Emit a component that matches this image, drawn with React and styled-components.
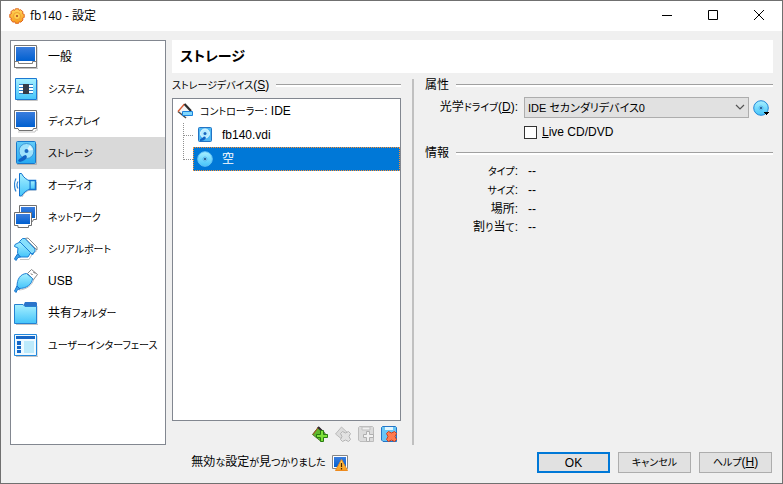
import React, { useState } from 'react'
import styled, { createGlobalStyle } from 'styled-components'

const GlobalStyle = createGlobalStyle`
    * {
        box-sizing: border-box;
    }

    body {
        margin: 0;
        color: #000;
        background: #f0f0f0;
        font-family: "Liberation Sans", "Noto Sans CJK JP", sans-serif;
        font-size: 12px;
        line-height: 16px;
        font-feature-settings: "palt";
    }

    button, select, input {
        font: inherit;
        font-feature-settings: inherit;
        color: inherit;
    }

    svg {
        display: block;
        flex: none;
    }
`

/* ---------- icons ---------- */

const Gradients = () => (
    <svg width="0" height="0" style={{ position: 'absolute' }} aria-hidden="true">
        <defs>
            <linearGradient id="screen" x1="0" y1="0" x2="0" y2="1">
                <stop offset="0" stopColor="#3a7ddd" />
                <stop offset="1" stopColor="#0060d0" />
            </linearGradient>
            <linearGradient id="aqua" x1="0" y1="0" x2="0" y2="1">
                <stop offset="0" stopColor="#a8f0ff" />
                <stop offset="1" stopColor="#44c4fa" />
            </linearGradient>
            <linearGradient id="sky" x1="0" y1="0" x2="0" y2="1">
                <stop offset="0" stopColor="#63ccf8" />
                <stop offset="1" stopColor="#27aaf2" />
            </linearGradient>
            <linearGradient id="amber" x1="0" y1="0" x2="0" y2="1">
                <stop offset="0" stopColor="#ffd65c" />
                <stop offset="1" stopColor="#f79a1c" />
            </linearGradient>
        </defs>
    </svg>
)

const Icon = ({ size = 24, children }) => (
    <svg width={size} height={size} viewBox={`0 0 ${size} ${size}`} fill="none" aria-hidden="true">
        {children}
    </svg>
)

const GearIcon = () => (
    <Icon size={16}>
        <path d="M6.4.8h3.2l.6 1.6 1.6-.7 2.2 2.2-.6 1.700 1.800.700v3.200l-1.800.800.600 1.700-2.200 2.200-1.600-.600-.600 1.700H6.400l-.700-1.700-1.700.600L1.800 12l.700-1.700L.800 9.500V6.300l1.700-.700-.700-1.700L4 1.700l1.700.700z" fill="url(#amber)" stroke="#e0641c" strokeLinejoin="round" />
        <circle cx="8" cy="8" r="3.500" fill="#ffcf50" stroke="#f0a030" />
        <circle cx="8" cy="8" r="1" fill="#a8401c" />
    </Icon>
)

const GeneralIcon = () => (
    <Icon>
        <path d="M2 23.500h22V2" stroke="#c4c4c4" />
        <path d="M.5.500h22v22H.500z" fill="#fff" stroke="#757575" />
        <path d="M2 2h19v14H2z" fill="url(#screen)" />
        <path d="M1 16.500h3.500v2h14v-2H22" stroke="#808080" />
    </Icon>
)

const SystemIcon = () => (
    <Icon>
        <path d="M3 23.500h20.500V3" stroke="#c4c4c4" />
        <path d="M1.500 1.500h21v21h-21z" fill="url(#aqua)" stroke="#1c78d2" />
        <path d="M5 7h14v10H5z" fill="#fff" />
        <path d="M5 7.500h14M5 10.500h14M5 13.500h14M5 16.500h14" stroke="#2b7cc8" />
        <path d="M9 7h6v10H9z" fill="#343b48" />
    </Icon>
)

const DisplayIcon = () => (
    <Icon>
        <path d="M4 23h17l1-2h2V3" stroke="#c4c4c4" />
        <path d="M.500 1.500h22v18h-3l-1 2H5l-1-2H.500z" fill="#fff" stroke="#707070" />
        <path d="M2 3h19v15H2z" fill="url(#screen)" />
    </Icon>
)

const StorageIcon = () => (
    <Icon>
        <path d="M3 23.500h19.500V3" stroke="#b0b0b0" />
        <rect x="2.500" y=".500" width="19" height="22" rx="1" fill="url(#sky)" stroke="#1778cc" />
        <circle cx="12.500" cy="10" r="7.500" fill="#9ee2fc" stroke="#3c96d8" />
        <path d="M12 10l4-6 3 5z" fill="#e0f8ff" />
        <circle cx="12.500" cy="10" r="2" fill="#1a6ac4" />
        <path d="M12 14c-3 0-4 3-7 4l-1 2 2 1c3-1 6-2 7-5z" fill="#1263c4" />
    </Icon>
)

const AudioIcon = () => (
    <Icon>
        <path d="M8 24c2-4 5-6 8-7h6.500V9" stroke="#c4c4c4" />
        <path d="M4 8.500c-1.200 2-1.200 5 0 7M2 5.500c-2 3.500-2 9.500 0 13" stroke="#2a84d4" strokeWidth="1.200" />
        <path d="M15.500 7.500h6v9h-6z" fill="url(#aqua)" stroke="#1272ce" strokeWidth="1.500" />
        <path d="M5.500.500h2c2 4 5 6 8.500 7.500v8c-3.500 1.500-6.500 3.500-8.500 7h-2z" fill="url(#aqua)" stroke="#1272ce" strokeLinejoin="round" />
    </Icon>
)

const NetworkIcon = () => (
    <Icon>
        <path d="M5.500.500h17v14h-3l-1 2h-10l-3-3z" fill="#fff" stroke="#707070" />
        <path d="M7 2h14v11H7z" fill="url(#screen)" />
        <path d="M.500 7.500h17v13h-3v2H4v-2H.500z" fill="#fff" stroke="#707070" />
        <path d="M2 9h14v10H2z" fill="url(#screen)" />
    </Icon>
)

const SerialIcon = () => (
    <Icon>
        <path d="M6 22.500h9l3-5 5-4" stroke="#c4c4c4" />
        <path d="M11 1.500l3-.500 9 9v3z" fill="#fff" stroke="#8c8c8c" />
        <path d="M6 5L1 7.500.500 9.500 4 11l-.500 5L6 20h8l2.500-4 2 2 1-2z" fill="url(#aqua)" stroke="#1c80d6" strokeLinejoin="round" />
        <path d="M8.500 1.500h2.500l10 10.500v2.500l-3 2.500L5.500 4.500z" fill="#86dffc" stroke="#1c80d6" strokeLinejoin="round" />
        <path d="M3.500 17l3 3-2.500.500L2 23.500.500 22l1-2z" fill="#3ba4e8" stroke="#1774ce" />
    </Icon>
)

const UsbIcon = () => (
    <Icon>
        <path d="M5 21c7-.500 13-4 15-11" stroke="#c4c4c4" />
        <path d="M13.500 4.500l4-4 6 5-4 5z" fill="#fff" stroke="#858585" />
        <path d="M17 4.500l1.500 1.500M19.500 3l1.500 1.500" stroke="#555" />
        <path d="M12.500 4.500l6 5c-.500 6-6 10-13.500 10L3 17.500c0-7 3-12.500 9.500-13z" fill="url(#aqua)" stroke="#1c80d6" strokeLinejoin="round" />
        <path d="M3 17l3 3-2.500.500-1.500 3L.500 22l1-2z" fill="#3ba4e8" stroke="#1774ce" />
    </Icon>
)

const FolderIcon = () => (
    <Icon>
        <path d="M2 23.500h22V5" stroke="#c4c4c4" />
        <path d="M9 5l2-4h11l1 1v4H9z" fill="#2b74ca" />
        <path d="M.500 3.500H9l2 2h11.500v17H.500z" fill="url(#aqua)" stroke="#2582d2" />
    </Icon>
)

const InterfaceIcon = () => (
    <Icon>
        <path d="M2 23.500h22V3" stroke="#c4c4c4" />
        <path d="M.500 1.500h22v21H.500z" fill="#effaff" stroke="#2388dc" />
        <path d="M2 3h19v3H2z" fill="#1767c6" />
        <path d="M3 8h4v4H3zM3 13h4v3H3zM3 17h4v3H3z" fill="#1668c8" />
        <path d="M10 8h10v12H10z" fill="#bdeafb" />
    </Icon>
)

const ControllerIcon = () => (
    <Icon size={16}>
        <path d="M7.500 1L15 9l-5 6L1 8.500z" fill="#f4f4f4" />
        <path d="M1 8.500L9 15" stroke="#4a4a4a" strokeWidth="1.500" />
        <path d="M7.500 1L1 8.500" stroke="#d85a30" strokeWidth="1.300" />
        <path d="M7.500 1L14 8" stroke="#2c2c2c" strokeWidth="2.200" />
        <path d="M5.500 8.500h10v4h-10z" fill="#82d8fc" stroke="#1c82dc" />
    </Icon>
)

const DiskIcon = () => (
    <Icon size={16}>
        <rect x="1.500" y=".500" width="13" height="14" rx="1" fill="#50b8f4" stroke="#2374c4" />
        <circle cx="8" cy="6.500" r="4.500" fill="#b4eaff" stroke="#e4f8ff" />
        <circle cx="8" cy="6.500" r="1.500" fill="#1a66c0" />
        <path d="M8 9.500c-2 0-3 2-5 3v1.500c3 0 5-1 6-3z" fill="#1263c4" />
    </Icon>
)

const DiscIcon = ({ menu }) => (
    <Icon size={16}>
        <circle cx="8" cy="8" r="7.300" fill="url(#aqua)" stroke={menu ? '#2388d8' : '#64c2f4'} />
        <circle cx="8" cy="8" r="2" fill="#8ce2ff" stroke="#54b6ec" />
        <circle cx="8" cy="8" r="1" fill="#123c78" />
        {menu && <path d="M11 12h5v1h-1v1h-1v1h-1v-1h-1v-1h-1z" fill="#000" />}
    </Icon>
)

const AddControllerIcon = () => (
    <Icon size={16}>
        <path d="M6.500 1l8 8-6 6-8-6.500z" fill="#61b72c" stroke="#4c7a30" />
        <path d="M6.500 1L1 8.500" stroke="#b04a24" />
        <path d="M6 1l6 6" stroke="#322834" strokeWidth="2" />
        <path d="M8.500 4.500h3v4h4v3h-4v4h-3v-4h-4v-3h4z" fill="#7ee03a" stroke="#287c12" />
    </Icon>
)

const RemoveControllerIcon = () => (
    <Icon size={16}>
        <path d="M6.500 1l8 7.500-6 6-8-6.500z" fill="#dcdcdc" stroke="#bcbcbc" />
        <path d="M7.500 5.500l3 1.500 3-1.500 2 2-1.500 3 1.500 3-2 2-3-1.500-3 1.500-2-2 1.500-3-1.500-3z" fill="#e2e2e2" stroke="#b4b4b4" />
    </Icon>
)

const AddAttachmentIcon = () => (
    <Icon size={16}>
        <path d="M.500 1.500l1-1h13l1 1v14H2l-1.500-1.500z" fill="#dcdcdc" stroke="#bcbcbc" />
        <path d="M4 1h8v3H4z" fill="#f0f0f0" stroke="#c0c0c0" />
        <path d="M8.500 5.500h3v3h4v3h-4v4h-3v-4h-3v-3h3z" fill="#f2f2f2" stroke="#b0b0b0" />
    </Icon>
)

const RemoveAttachmentIcon = () => (
    <Icon size={16}>
        <path d="M.500 1.500l1-1h13l1 1v14H2l-1.500-1.500z" fill="#68c6f6" stroke="#2475c6" />
        <path d="M4 1h8v3H4z" fill="#e2f6ff" />
        <path d="M7.500 5.500l3 1.500 3-1.500 2 2-1.500 3 1.500 3-2 2-3-1.500-3 1.500-2-2 1.500-3-1.500-3z" fill="#ff7c50" stroke="#d0401c" />
    </Icon>
)

const WarningIcon = () => (
    <Icon size={16}>
        <path d="M.500.500h15v13h-15z" fill="#fff" stroke="#858585" />
        <path d="M2 2h12v10H2z" fill="url(#screen)" />
        <path d="M9.500 4.500l6 11h-12z" fill="url(#amber)" stroke="#ee8a1c" strokeLinejoin="round" />
        <path d="M9.500 8v4M9.500 13v1.500" stroke="#4a2500" strokeWidth="1.200" />
    </Icon>
)

/* ---------- text ---------- */

const KanaRun = styled.span`
    font-size: 10px;
`

// kana is set a step smaller than kanji and latin
const Text = ({ children }) => (
    <span>
        {children.split(/([\u3040-\u30ff]+)/).map((part, i) => (
            i % 2 ? <KanaRun key={i}>{part}</KanaRun> : part
        ))}
    </span>
)

/* ---------- layout ---------- */

const Window = styled.div`
    display: flex;
    flex-direction: column;
    min-height: 100vh;
    border: 1px solid #707070;
    background: #f0f0f0;
`

const TitleBar = styled.header`
    display: flex;
    align-items: center;
    height: 30px;
    padding-left: 8px;
    gap: 5px;
    background: #fff;
    font-family: "Open Sans", "Noto Sans CJK JP", sans-serif;
`

const WindowTitle = styled.span`
    flex: 1;
`

const WindowButton = styled.button`
    display: flex;
    align-items: center;
    justify-content: center;
    width: 46px;
    height: 30px;
    margin-left: -5px;
    padding: 0 0 2px;
    border: 0;
    background: transparent;
`

const Body = styled.div`
    display: flex;
    flex: 1;
    gap: 6px;
    padding: 9px 9px 7px;
`

const Sidebar = styled.nav`
    width: 156px;
    flex: none;
    border: 1px solid #828790;
    background: #fff;
`

const NavItem = styled.button`
    display: flex;
    align-items: center;
    gap: 10px;
    width: 100%;
    height: 32px;
    padding: 0 3px;
    border: 0;
    background: ${({ $active }) => ($active ? '#d9d9d9' : 'transparent')};
    text-align: left;
    white-space: nowrap;
`

const Main = styled.main`
    display: flex;
    flex-direction: column;
    flex: 1;
    min-width: 0;
    gap: 6px;
`

const PageTitle = styled.h1`
    margin: 0;
    padding: 0 8px;
    background: #fff;
    font-size: 14px;
    line-height: 33px;
`

const Panes = styled.div`
    display: flex;
    flex: 1;
`

const DevicePane = styled.section`
    display: flex;
    flex-direction: column;
    flex: none;
    width: 229px;
`

const Splitter = styled.div`
    flex: none;
    width: 2px;
    margin: 0 11px;
    background: #c0c0c0;
`

const DetailPane = styled.section`
    flex: 1;
    min-width: 0;
`

const GroupTitle = styled.h2`
    display: flex;
    align-items: center;
    gap: 7px;
    margin: 0;
    font-size: 12px;
    font-weight: normal;
    line-height: 12px;
    white-space: nowrap;

    &::after {
        content: '';
        flex: 1;
        height: 2px;
        border-top: 1px solid #a0a0a0;
        background: #fff;
    }
`

const Tree = styled.ul`
    flex: 1;
    margin: 6px 0 5px;
    padding: 0;
    border: 1px solid #828790;
    background: #fff;
    list-style: none;
`

const TreeRow = styled.div`
    display: flex;
    align-items: center;
    gap: ${({ $root }) => ($root ? 7 : 9)}px;
    height: 24px;
    padding-left: 3px;
    border: 1px dotted ${({ $selected }) => ($selected ? '#ff9030' : 'transparent')};
    background: ${({ $selected }) => ($selected ? '#0078d7' : 'transparent')};
    color: ${({ $selected }) => ($selected ? '#fff' : '#000')};
`

const Branch = styled.ul`
    margin: 0;
    padding: 0 0 0 10px;
    list-style: none;
`

const Leaf = styled.li`
    display: grid;
    grid-template-columns: 10px 1fr;

    &::before {
        content: '';
        height: 12px;
        border-left: 1px dotted #909090;
        border-bottom: 1px dotted #909090;
    }

    &:not(:last-child) {
        background: repeating-linear-gradient(#909090 0 1px, transparent 1px 2px) 0 0 / 1px 100% no-repeat;
    }
`

const ToolBar = styled.div`
    display: flex;
    justify-content: flex-end;
    gap: 7px;
    padding: 0 4px 3px;
`

const IconButton = styled.button`
    padding: 0;
    border: 0;
    background: transparent;
`

const Form = styled.div`
    display: grid;
    grid-template-columns: 93px 1fr;
    column-gap: 6px;
    row-gap: 6px;
    align-items: center;
    padding: 6px 4px 7px 0;
`

const FieldLabel = styled.label`
    text-align: right;
    white-space: nowrap;
`

const DriveField = styled.div`
    display: flex;
    align-items: center;
    gap: 4px;
`

const SelectBox = styled.div`
    position: relative;
    flex: 1;

    select {
        appearance: none;
        display: block;
        width: 100%;
        height: 21px;
        padding: 0 20px 0 3px;
        border: 1px solid #adadad;
        border-radius: 0;
        background: #e1e1e1;
        font-size: 11px;
    }

    svg {
        position: absolute;
        top: 7px;
        right: 4px;
        pointer-events: none;
    }
`

const CheckLabel = styled.label`
    grid-column: 2;
    display: flex;
    align-items: center;
    gap: 5px;

    input {
        appearance: none;
        width: 13px;
        height: 13px;
        margin: 0;
        border: 1px solid #333;
        background: #fff;
    }

    input:checked {
        box-shadow: inset 0 0 0 2px #fff;
        background: #333;
    }
`

const Info = styled.dl`
    display: grid;
    grid-template-columns: 93px 1fr;
    column-gap: 10px;
    margin: 0;
    padding-top: 3px;
    line-height: 18px;

    dt {
        text-align: right;
    }

    dd {
        margin: 0;
    }
`

const Footer = styled.footer`
    display: flex;
    align-items: center;
    gap: 8px;
    padding: 0 10px 10px 9px;
`

const Message = styled.div`
    display: flex;
    align-items: center;
    justify-content: center;
    flex: 1;
    gap: 6px;
`

const PushButton = styled.button`
    width: 73px;
    height: 21px;
    padding: 0;
    border: ${({ $primary }) => ($primary ? '2px solid #0078d7' : '1px solid #adadad')};
    background: #e1e1e1;
    line-height: 16px;
`

const categories = [
    { name: '一般', icon: <GeneralIcon /> },
    { name: 'システム', icon: <SystemIcon /> },
    { name: 'ディスプレイ', icon: <DisplayIcon /> },
    { name: 'ストレージ', icon: <StorageIcon /> },
    { name: 'オーディオ', icon: <AudioIcon /> },
    { name: 'ネットワーク', icon: <NetworkIcon /> },
    { name: 'シリアルポート', icon: <SerialIcon /> },
    { name: 'USB', icon: <UsbIcon /> },
    { name: '共有フォルダー', icon: <FolderIcon /> },
    { name: 'ユーザーインターフェース', icon: <InterfaceIcon /> },
]

const details = ['タイプ:', 'サイズ:', '場所:', '割り当て:']

const App = () => {

    const [active, setActive] = useState('ストレージ');
    const [live, setLive] = useState(false);

    return (
        <Window>
            <GlobalStyle />
            <Gradients />

            <TitleBar>
                <GearIcon />
                <WindowTitle>fb140 - 設定</WindowTitle>
                <WindowButton aria-label="最小化">
                    <Icon size={10}><path d="M0 5.500h10" stroke="#000" /></Icon>
                </WindowButton>
                <WindowButton aria-label="最大化">
                    <Icon size={10}><path d="M.500.500h9v9h-9z" stroke="#000" /></Icon>
                </WindowButton>
                <WindowButton aria-label="閉じる">
                    <Icon size={10}><path d="M0 0l10 10M10 0L0 10" stroke="#000" /></Icon>
                </WindowButton>
            </TitleBar>

            <Body>
                <Sidebar>
                    {categories.map(({ name, icon }) => (
                        <NavItem key={name} $active={active === name} onClick={() => setActive(name)}>
                            {icon}
                            <Text>{name}</Text>
                        </NavItem>
                    ))}
                </Sidebar>

                <Main>
                    <PageTitle>ストレージ</PageTitle>
                    <Panes>
                        <DevicePane>
                            <GroupTitle><span><Text>ストレージデバイス(</Text><u>S</u>)</span></GroupTitle>
                            <Tree>
                                <li>
                                    <TreeRow $root><ControllerIcon /><Text>コントローラー: IDE</Text></TreeRow>
                                    <Branch>
                                        <Leaf><TreeRow><DiskIcon /><Text>fb140.vdi</Text></TreeRow></Leaf>
                                        <Leaf><TreeRow $selected><DiscIcon /><Text>空</Text></TreeRow></Leaf>
                                    </Branch>
                                </li>
                            </Tree>
                            <ToolBar>
                                <IconButton aria-label="コントローラーを追加"><AddControllerIcon /></IconButton>
                                <IconButton aria-label="コントローラーを削除" disabled><RemoveControllerIcon /></IconButton>
                                <IconButton aria-label="割り当てを追加" disabled><AddAttachmentIcon /></IconButton>
                                <IconButton aria-label="割り当てを削除"><RemoveAttachmentIcon /></IconButton>
                            </ToolBar>
                        </DevicePane>

                        <Splitter />

                        <DetailPane>
                            <GroupTitle>属性</GroupTitle>
                            <Form>
                                <FieldLabel htmlFor="drive"><Text>光学ドライブ(</Text><u>D</u>):</FieldLabel>
                                <DriveField>
                                    <SelectBox>
                                        <select id="drive">
                                            <option>IDE セカンダリデバイス0</option>
                                        </select>
                                        <svg width="10" height="7" viewBox="0 0 10 7" fill="none" aria-hidden="true">
                                            <path d="M1 1l4 4 4-4" stroke="#555" strokeWidth="1.200" />
                                        </svg>
                                    </SelectBox>
                                    <IconButton aria-label="ディスクを選択"><DiscIcon menu /></IconButton>
                                </DriveField>
                                <CheckLabel>
                                    <input type="checkbox" checked={live} onChange={() => setLive(!live)} />
                                    <span><u>L</u>ive CD/DVD</span>
                                </CheckLabel>
                            </Form>

                            <GroupTitle>情報</GroupTitle>
                            <Info>
                                {details.map((label) => (
                                    <React.Fragment key={label}>
                                        <dt><Text>{label}</Text></dt>
                                        <dd>--</dd>
                                    </React.Fragment>
                                ))}
                            </Info>
                        </DetailPane>
                    </Panes>
                </Main>
            </Body>

            <Footer>
                <Message><Text>無効な設定が見つかりました</Text><WarningIcon /></Message>
                <PushButton $primary>OK</PushButton>
                <PushButton><Text>キャンセル</Text></PushButton>
                <PushButton><Text>ヘルプ(</Text><u>H</u>)</PushButton>
            </Footer>
        </Window>
    )
}

export default App
